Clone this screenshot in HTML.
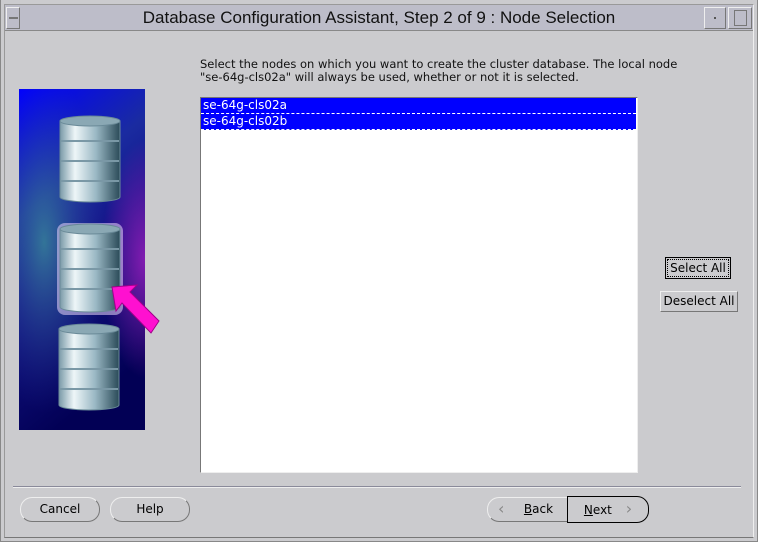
<!DOCTYPE html>
<html><head><style>
*{margin:0;padding:0;box-sizing:border-box}
body{width:758px;height:542px;background:#cbcbce;font-family:"DejaVu Sans","Liberation Sans",sans-serif;position:relative;overflow:hidden}
.abs{position:absolute}
.btn{position:absolute;border:1px solid #eee;border-right-color:#777;border-bottom-color:#777;border-radius:12px;font-size:12px;text-align:center;line-height:22px;color:#000;background:#cbcbce}
</style></head><body>
<div class="abs" style="left:0;top:0;width:758px;height:542px;border:1px solid #888;border-top:none"></div>
<div class="abs" style="left:4px;top:4px;width:750px;height:534px;border:1px solid #999;border-right-color:#eee;border-bottom-color:#777"></div>
<div class="abs" style="left:5px;top:5px;width:748px;height:26px;background:#bdbdc9;border-bottom:1px solid #888"></div>
<div class="abs" style="left:6px;top:7px;width:14px;height:22px;border:1px solid #eee;border-right-color:#777;border-bottom-color:#777"></div>
<div class="abs" style="left:9px;top:17px;width:9px;height:2px;background:#777"></div>
<div class="abs" style="left:0;top:6px;width:758px;text-align:center;font-family:'Liberation Sans',sans-serif;font-size:17px;line-height:24px;color:#111">Database Configuration Assistant, Step 2 of 9 : Node Selection</div>
<div class="abs" style="left:704px;top:7px;width:22px;height:22px;border:1px solid #eee;border-right-color:#777;border-bottom-color:#777"></div>
<div class="abs" style="left:714px;top:17px;width:2px;height:2px;background:#555"></div>
<div class="abs" style="left:728px;top:7px;width:24px;height:22px;border:1px solid #eee;border-right-color:#777;border-bottom-color:#777"></div>
<div class="abs" style="left:734px;top:10px;width:13px;height:16px;border:1px solid #777"></div>

<svg class="abs" style="left:19px;top:89px;overflow:visible" width="150" height="341">
<defs>
<linearGradient id="bg" x1="0" y1="0" x2="0.3" y2="1"><stop offset="0" stop-color="#0000ff"/><stop offset="0.35" stop-color="#1a2ba0"/><stop offset="0.55" stop-color="#14168a"/><stop offset="1" stop-color="#020055"/></linearGradient>
<radialGradient id="gl" cx="0.2" cy="0.45" r="0.5"><stop offset="0" stop-color="#3a8a9a" stop-opacity="0.8"/><stop offset="1" stop-color="#2a3aa0" stop-opacity="0"/></radialGradient>
<radialGradient id="pk" cx="1" cy="0.5" r="0.35"><stop offset="0" stop-color="#a020c0" stop-opacity="0.8"/><stop offset="1" stop-color="#a020c0" stop-opacity="0"/></radialGradient>
<linearGradient id="cy" x1="0" x2="1"><stop offset="0" stop-color="#7a9aa8"/><stop offset="0.25" stop-color="#eef6f8"/><stop offset="0.6" stop-color="#9ab8c4"/><stop offset="1" stop-color="#2a4a58"/></linearGradient>
</defs>
<rect width="126" height="341" fill="url(#bg)"/>
<rect width="126" height="341" fill="url(#gl)"/>
<rect width="126" height="341" fill="url(#pk)"/>
<g fill="url(#cy)" stroke="#6a8a98" stroke-width="1">
<path d="M41 32 v76 a30 5 0 0 0 60 0 v-76z"/><ellipse cx="71" cy="32" rx="30" ry="5" fill="#8aa8b4"/>
<rect x="38" y="134" width="66" height="92" rx="8" fill="#d8c8f0" stroke="none" opacity="0.6"/>
<path d="M41 140 v78 a30 5 0 0 0 60 0 v-78z"/><ellipse cx="71" cy="140" rx="30" ry="5" fill="#8aa8b4"/>
<path d="M40 240 v76 a30 5 0 0 0 60 0 v-76z"/><ellipse cx="70" cy="240" rx="30" ry="5" fill="#8aa8b4"/>
</g>
<g stroke="#7a98a6" stroke-width="2">
<line x1="42" y1="52" x2="100" y2="52"/><line x1="42" y1="72" x2="100" y2="72"/><line x1="42" y1="92" x2="100" y2="92"/>
<line x1="42" y1="160" x2="100" y2="160"/><line x1="42" y1="180" x2="100" y2="180"/><line x1="42" y1="200" x2="100" y2="200"/>
<line x1="41" y1="260" x2="99" y2="260"/><line x1="41" y1="280" x2="99" y2="280"/><line x1="41" y1="300" x2="99" y2="300"/>
</g>
<path d="M93 198 L118 196 L111 203 L140 232 L132 244 L103 214 L97 222 Z" fill="#ff10d0" stroke="#a0008a"/>
</svg>

<div class="abs" style="left:200px;top:58px;font-size:11.5px;line-height:13px;color:#111">Select the nodes on which you want to create the cluster database. The local node<br>"se-64g-cls02a" will always be used, whether or not it is selected.</div>

<div class="abs" style="left:200px;top:97px;width:438px;height:376px;background:#fff;border:1px solid #777;border-right-color:#eee;border-bottom-color:#eee"></div>
<div class="abs" style="left:201px;top:98px;width:435px;height:16px;background:#0000ff;color:#fff;font-size:12px;line-height:15px;padding-left:2px;border-bottom:1px dashed #fff">se-64g-cls02a</div>
<div class="abs" style="left:201px;top:114px;width:435px;height:16px;background:#0000ff;color:#fff;font-size:12px;line-height:15px;padding-left:2px;border-bottom:1px dashed #fff">se-64g-cls02b</div>

<div class="abs" style="left:665px;top:257px;width:66px;height:22px;border:1px solid #000;background:#cbcbce"></div>
<div class="abs" style="left:667px;top:259px;width:62px;height:18px;border:1px dotted #000;font-size:12px;line-height:16px;text-align:center">Select All</div>
<div class="abs" style="left:660px;top:291px;width:78px;height:21px;border:1px solid #eee;border-right-color:#777;border-bottom-color:#777;font-size:12px;line-height:19px;text-align:center">Deselect All</div>

<div class="abs" style="left:13px;top:486px;width:728px;height:1px;background:#8a8a9a"></div>
<div class="abs" style="left:13px;top:487px;width:728px;height:1px;background:#eee"></div>

<div class="btn" style="left:20px;top:497px;width:80px;height:25px">Cancel</div>
<div class="btn" style="left:110px;top:497px;width:80px;height:25px">Help</div>
<div class="btn" style="left:487px;top:497px;width:85px;height:25px;border-radius:12px 0 0 12px"><span style="color:#888;position:absolute;left:10px;font-size:16px;line-height:21px">&#x2039;</span><span style="margin-left:18px"><u>B</u>ack</span></div>
<div class="btn" style="left:567px;top:496px;width:82px;height:27px;border:1px solid #000;border-radius:0 12px 12px 0;line-height:24px"><u>N</u>ext <span style="color:#888;margin-left:10px;font-size:16px">&#x203A;</span></div>
</body></html>
